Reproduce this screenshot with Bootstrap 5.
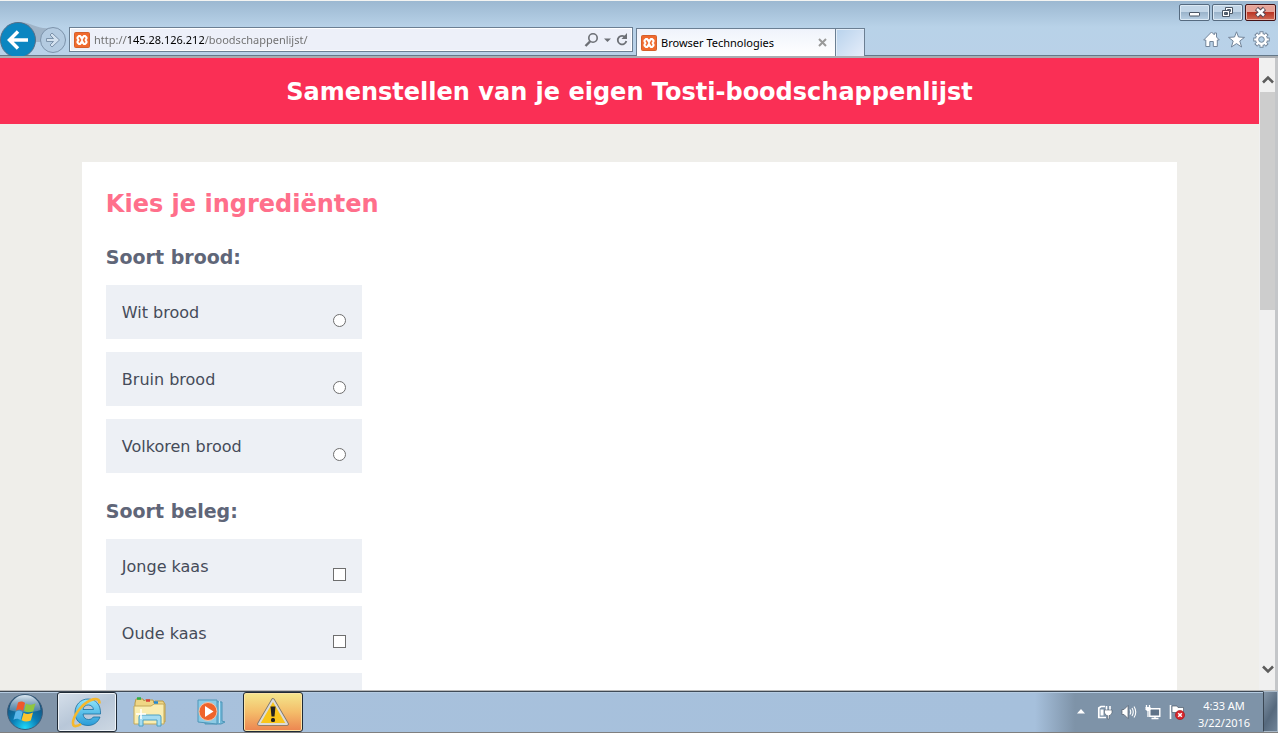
<!DOCTYPE html>
<html lang="nl">
<head>
<meta charset="utf-8">
<meta name="viewport" content="width=device-width, initial-scale=1">
<title>Browser Technologies</title>
<link href="https://cdn.jsdelivr.net/npm/bootstrap@5.3.0/dist/css/bootstrap.min.css" rel="stylesheet">
<style>
  body { font-family: "Noto Sans", "Open Sans", sans-serif; font-size: 11px; line-height: 16px; background: #b9d1e8; }
  svg { display: block; flex: none; }
  button { border: 0; padding: 0; background: none; }

  /* Browser frame */
  .frame-top { height: 58px; border-top: 1px solid #f4f4f2; border-bottom: 2px solid #a9adb2; background: linear-gradient(#9cb8d1 0, #b8d2e8 26px, #b9d1e8 100%); box-shadow: inset 0 -1px #647889; }
  .nav-circles { width: 69px; }
  .address { width: 564px; height: 25px; border: 1px solid #6b7f93; background: #edf0f9; box-shadow: inset 0 0 0 1px #fff; }
  .address input { border: 0; outline: 0; padding: 0; font-size: 11px; color: transparent; background: linear-gradient(90deg, #6d6d6d 32px, #000 32px 110px, #6d6d6d 110px); -webkit-background-clip: text; background-clip: text; }
  .page-tab { width: 200px; height: 28px; margin-left: 3px; border: 1px solid #6b7f93; border-bottom: 0; background: linear-gradient(#eff3fb, #fff); color: #000; }
  .new-tab { width: 29px; height: 28px; border: 1px solid #6b7f93; border-left: 0; border-bottom: 0; background: linear-gradient(135deg, #b8d2ec, #e6eefa); box-shadow: inset 1px 1px #e2edf8; }
  .frame-tools { padding: 3px 2px 4px 0; }
  .win-btns { gap: 2px; }
  .tool-btns { padding-right: 6px; }
  .win-btn { width: 31px; height: 17px; border: 1px solid #566b80; border-radius: 2px; background: linear-gradient(#c3d6e7 0 45%, #9bb4cb 50%, #b9d0e4); box-shadow: inset 0 0 0 1px #dce9f4; }
  .win-close { border-color: #431216; background: linear-gradient(#e6a398 0 45%, #bb3626 50%, #cf6a54); box-shadow: inset 0 0 0 1px #e9b1a6; }

  /* Web page */
  .site { font-family: Verdana, "DejaVu Sans", sans-serif; background: #efeeea; }
  .site-header { height: 66px; padding-top: 2px; background: #fa2f55; color: #fff; }
  .site-title { font-size: 24px; line-height: 32px; font-weight: 700; }
  .panel { width: 87%; margin: 38px auto 0; padding: 24px; background: #fff; }
  .panel-title { font-size: 24px; line-height: 36px; margin-bottom: 10px; font-weight: 700; color: #ff6f8b; }
  .group-title { font-size: 19px; line-height: 26px; padding: 12px 0 15px; font-weight: 700; color: #5f6678; }
  .choice { width: 256px; height: 54px; margin-bottom: 13px; padding: 2px 16px 0; background: #edf0f5; color: #454b59; font-size: 16px; line-height: 24px; }
  .choice input { appearance: none; width: 13px; height: 13px; margin: 0 0 12px; border: 1px solid #6e6e6e; background: #fff; }
  .choice input[type=radio] { border-radius: 50%; }
  .scroller { width: 19px; padding-left: 1px; background: #f0f0f0; border-right: 3px solid #c4c6c9; }
  .scroll-arrow { height: 34px; padding-top: 8px; }
  .scroll-thumb { height: 218px; background: #cdcdcd; }

  /* Taskbar */
  .taskbar { height: 43px; border-top: 1px solid #b9b9b9; border-bottom: 1px solid #7f7f7f; background: linear-gradient(90deg, #8094a9 0 56px, #a8c1dc 118px, #a6c0dc 1035px, #7e93a8 1075px); box-shadow: inset 0 1px #3f4a56, inset 0 2px #b5cbe1; }
  .orb { margin: 0 14px 0 7px; }
  .task { width: 60px; height: 40px; border: 1px solid #1f2a36; border-radius: 3px; margin-right: 2px; }
  .task-flat { border-color: transparent; }
  .task-open { background: linear-gradient(150deg, #d5dfea, #b8c7d8 50%, #cdd8e3); box-shadow: inset 0 0 0 1px #eef3f8; }
  .task-alert { background: linear-gradient(#f3e78d, #f4bd6a 50%, #ec8450); box-shadow: inset 0 0 0 1px #fbe4a6; }
  .clock { width: 78px; line-height: 17px; color: #fff; }
  .desktop-peek { width: 15px; border: 1px solid #a9b9c8; border-left-color: #3a4653; background: linear-gradient(120deg, #8496a8, #56697d 55%, #6f8397); }
</style>
</head>
<body class="vh-100 d-flex flex-column overflow-hidden">

<svg width="0" height="0" class="position-absolute" aria-hidden="true">
  <symbol id="xampp" viewBox="0 0 16 16">
    <rect x=".5" y=".5" width="15" height="15" rx="1" fill="#f06a2e" stroke="#d4602c"/>
    <path d="M4.500 3h2L8 4.500 9.500 3h2L13.500 5v2l-1 1 1 1v2l-2 2h-2L8 11.500 6.500 13h-2l-2-2V9l1-1-1-1V5z" fill="#fff"/>
    <path d="M5 5.500L6.500 8 5 10.500M11 5.500L9.500 8l1.500 2.500M6.500 8" fill="none" stroke="#f06a2e" stroke-width="1.500"/>
  </symbol>
</svg>

<header class="frame-top d-flex align-items-end justify-content-between flex-shrink-0">
  <div class="d-flex align-items-end">
    <div class="nav-circles">
      <svg width="69" height="34" viewBox="0 0 69 34" role="img" aria-label="Terug en vooruit">
        <path d="M18 0c15 0 18 8 34 6v14H18z" fill="#9fb3c7"/>
        <circle cx="18" cy="18" r="17.500" fill="#0b86c1" stroke="#566f88"/>
        <path d="M28 18H10M18 9.500L9.500 18l8.500 8.500" fill="none" stroke="#fff" stroke-width="3.500"/>
        <circle cx="53" cy="18" r="12.500" fill="#b4cbe1" stroke="#7d93ab"/>
        <path d="M46.500 16.500h7l-3.500-3.500 2-2 7.500 7-7.500 7-2-2 3.500-3.500h-7z" fill="#d3e1ef" stroke="#7d93ab"/>
      </svg>
    </div>
    <form class="address d-flex align-items-center mb-1 ps-1 pe-1">
      <svg width="16" height="16" class="me-1"><use href="#xampp"/></svg>
      <input class="flex-grow-1" type="text" aria-label="Adres" value="http://145.28.126.212/boodschappenlijst/">
      <button type="button" aria-label="Zoeken"><svg width="28" height="16" viewBox="0 0 28 16"><circle cx="9" cy="6" r="4.200" fill="none" stroke="#6c6f75" stroke-width="1.600"/><path d="M6 9.500L1.500 14" stroke="#6c6f75" stroke-width="2.400"/><path d="M20 6.500h7l-3.500 3.500z" fill="#6c6f75"/></svg></button>
      <button type="button" class="ms-1" aria-label="Vernieuwen"><svg width="12" height="14" viewBox="0 0 12 14"><path d="M9.500 4.500A4.300 4.300 0 1 0 10.300 8" fill="none" stroke="#6c6f75" stroke-width="1.800"/><path d="M11 0v6H5.500z" fill="#6c6f75"/></svg></button>
    </form>
    <div class="page-tab d-flex align-items-center px-1">
      <svg width="16" height="16" class="me-1"><use href="#xampp"/></svg>
      <span class="flex-grow-1">Browser Technologies</span>
      <button type="button" aria-label="Tabblad sluiten" class="me-1"><svg width="9" height="9" viewBox="0 0 9 9"><path d="M1 1l7 7M8 1L1 8" stroke="#999" stroke-width="2"/></svg></button>
    </div>
    <button type="button" class="new-tab" aria-label="Nieuw tabblad"></button>
  </div>

  <div class="frame-tools d-flex flex-column align-items-end align-self-stretch justify-content-between">
    <div class="win-btns d-flex">
      <button type="button" class="win-btn" aria-label="Minimaliseren"><svg width="29" height="15" viewBox="0 0 29 15"><rect x="9.500" y="7.500" width="10" height="3.500" rx=".5" fill="#fff" stroke="#4a5665"/></svg></button>
      <button type="button" class="win-btn" aria-label="Verkleinen"><svg width="29" height="15" viewBox="0 0 29 15"><g fill="#fff" stroke="#4a5665"><path fill-rule="evenodd" d="M12.500 2.500h7v6h-7zM14.500 4.500h3v2h-3z"/><path fill-rule="evenodd" d="M9.500 5.500h7v6h-7zM11.500 7.500h3v2h-3z"/></g></svg></button>
      <button type="button" class="win-btn win-close" aria-label="Sluiten"><svg width="29" height="15" viewBox="0 0 29 15"><path d="M10.500 3.500L18.500 11M18.500 3.500L10.500 11" stroke="#5b4a55" stroke-width="4.600"/><path d="M11 4l7 6.500M18 4l-7 6.500" stroke="#fff" stroke-width="2.400"/></svg></button>
    </div>
    <div class="tool-btns d-flex gap-2 pb-1">
      <button type="button" aria-label="Start"><svg width="17" height="17" viewBox="0 0 17 17"><path d="M8.500 1l2.800 2.800V2h2.200v4l2.800 3h-2v6.500h-4v-5h-3.500v5h-4V9H.7z" fill="#fff" stroke="#73859a"/></svg></button>
      <button type="button" aria-label="Favorieten"><svg width="17" height="17" viewBox="0 0 17 17"><path d="M8.500.8l2 5.200 6 .4-4.700 3.600 1.800 6-5.100-3.400L3.400 16l1.800-6L.5 6.400l6-.4z" fill="#fff" stroke="#73859a"/></svg></button>
      <button type="button" aria-label="Extra"><svg width="17" height="17" viewBox="0 0 17 17"><g stroke="#73859a" stroke-width="4"><path id="teeth" d="M8.500.3v16.400M.3 8.500h16.400M2.700 2.700l11.600 11.600M14.300 2.700L2.700 14.300"/></g><circle cx="8.500" cy="8.500" r="6" fill="#fff" stroke="#73859a"/><path d="M8.500 1.200v14.600M1.200 8.500h14.600M3.400 3.400l10.200 10.200M13.600 3.400L3.400 13.600" stroke="#fff" stroke-width="2.200"/><circle cx="8.500" cy="8.500" r="2.800" fill="#b9d1e8" stroke="#73859a"/></svg></button>
    </div>
  </div>
</header>

<div class="d-flex flex-grow-1 overflow-hidden">
  <div class="site flex-grow-1 overflow-hidden">
    <div class="site-header d-flex align-items-center justify-content-center">
      <h1 class="site-title m-0">Samenstellen van je eigen Tosti-boodschappenlijst</h1>
    </div>
    <main class="panel">
      <h2 class="panel-title">Kies je ingrediënten</h2>
      <h3 class="group-title m-0">Soort brood:</h3>
      <label class="choice d-flex align-items-center justify-content-between"><span>Wit brood</span><input class="align-self-end" type="radio" name="brood"></label>
      <label class="choice d-flex align-items-center justify-content-between"><span>Bruin brood</span><input class="align-self-end" type="radio" name="brood"></label>
      <label class="choice d-flex align-items-center justify-content-between"><span>Volkoren brood</span><input class="align-self-end" type="radio" name="brood"></label>
      <h3 class="group-title m-0">Soort beleg:</h3>
      <label class="choice d-flex align-items-center justify-content-between"><span>Jonge kaas</span><input class="align-self-end" type="checkbox" name="beleg"></label>
      <label class="choice d-flex align-items-center justify-content-between"><span>Oude kaas</span><input class="align-self-end" type="checkbox" name="beleg"></label>
      <div class="choice"></div>
    </main>
  </div>
  <div class="scroller d-flex flex-column flex-shrink-0">
    <button type="button" class="scroll-arrow d-flex justify-content-center align-items-center" aria-label="Omhoog"><svg width="12" height="9" viewBox="0 0 12 9"><path d="M1 7.500l5-5 5 5" fill="none" stroke="#5c5c5c" stroke-width="2.600"/></svg></button>
    <div class="scroll-thumb"></div>
    <button type="button" class="scroll-arrow d-flex justify-content-center align-items-center mt-auto pt-0 pb-2" aria-label="Omlaag"><svg width="12" height="9" viewBox="0 0 12 9"><path d="M1 1.500l5 5 5-5" fill="none" stroke="#5c5c5c" stroke-width="2.600"/></svg></button>
  </div>
</div>

<footer class="taskbar d-flex justify-content-between flex-shrink-0">
  <div class="d-flex align-items-center">
    <button type="button" class="orb" aria-label="Startmenu">
      <svg width="36" height="36" viewBox="0 0 36 36">
        <defs>
          <radialGradient id="orb" cx=".5" cy=".95" r=".85"><stop offset="0" stop-color="#20d8f8"/><stop offset=".45" stop-color="#0b7db5"/><stop offset="1" stop-color="#174a72"/></radialGradient>
          <linearGradient id="shine" x2="0" y2="1"><stop stop-color="#dbe8f2"/><stop offset="1" stop-color="#7c9cb8" stop-opacity=".5"/></linearGradient>
        </defs>
        <circle cx="18" cy="18" r="17.500" fill="url(#orb)" stroke="#3d5c79"/>
        <path d="M2.500 16a15.500 15 0 0 1 31 0c-8 3-23 3-31 0z" fill="url(#shine)"/>
        <path d="M11 8.500c3-1.500 5-1 7 .5l-2 8c-2-1.500-4-2-7-.5z" fill="#f0572b"/>
        <path d="M19 9.500c3 1.800 6 1.500 9.500-.3l-2.200 8c-3.400 1.500-6.200 1.500-9.300-.2z" fill="#8fc641"/>
        <path d="M8.600 17.700c3-1.500 5-1 7 .5l-2.100 8c-2-1.500-4-2-7-.5z" fill="#5bb6ea"/>
        <path d="M16.600 18.700c3 1.800 6 1.600 9.400-.2l-2.200 8c-3.400 1.500-6.200 1.500-9.300-.2z" fill="#fcc42c"/>
      </svg>
    </button>
    <button type="button" class="task task-open d-flex justify-content-center align-items-center" aria-label="Internet Explorer">
      <svg width="32" height="32" viewBox="0 0 32 32">
        <defs><linearGradient id="ie" x2="0" y2="1"><stop stop-color="#8fe4fb"/><stop offset="1" stop-color="#2a9cd8"/></linearGradient></defs>
        <path fill-rule="evenodd" d="M17 3c8 0 13 6 12.500 15H12c.3 3.500 2.500 5.500 5.500 5.500 2.300 0 3.800-.9 4.800-2.500H29c-2 5.500-6.500 8.500-12 8.500-8 0-13-5.500-13-13S9.500 3 17 3zM12 13.500h10.500C22 10.500 20 9 17.200 9s-4.700 1.600-5.200 4.500z" fill="url(#ie)" stroke="#1b6f9f" stroke-width=".8"/>
        <path d="M28.500 7.500c.5-8-11-4.500-19 4.500S-.5 31 5 30c1.500-.2 3.500-1 5-2" fill="none" stroke="#f5b82e" stroke-width="2.600"/>
      </svg>
    </button>
    <button type="button" class="task task-flat d-flex justify-content-center align-items-center" aria-label="Verkenner">
      <svg width="34" height="32" viewBox="0 0 34 32">
        <path d="M3 7l1-4h7l1 2 1-1h8l1 3 1-2h8l2 3v18H3z" fill="#efd684" stroke="#b79a4a"/>
        <path d="M2 10h17l3-2h10v20H2z" fill="#f9edb1" stroke="#c3a858"/>
        <path d="M5 2.500h4" stroke="#30ad45" stroke-width="2.500"/><path d="M14 4.500h4" stroke="#d94036" stroke-width="2.500"/><path d="M22 6.500h4" stroke="#248bd2" stroke-width="2.500"/>
        <path d="M7 30V21q0-2 2-2h18q2 0 2 2v9h-4v-6H11v6z" fill="#a4dcf1" stroke="#4ba0c4"/>
        <path d="M9 13v10M4 18h10" stroke="#fff" stroke-width="1.500"/>
      </svg>
    </button>
    <button type="button" class="task task-flat d-flex justify-content-center align-items-center" aria-label="Mediaspeler">
      <svg width="32" height="28" viewBox="0 0 32 28">
        <path d="M10 3l17 1v19l3 1-4 2H10z" fill="#72b8d8" stroke="#4e96b8"/><path d="M24.500 3v22" stroke="#c3e7f4"/>
        <path d="M3 2h19v24L3 24z" fill="#8ccbe5" stroke="#4e96b8"/>
        <circle cx="13" cy="13.500" r="9" fill="#ef642b" stroke="#f6c1a5"/><path d="M10 8l8.500 5.500L10 19z" fill="#fff"/>
      </svg>
    </button>
    <button type="button" class="task task-alert d-flex justify-content-center align-items-center" aria-label="Waarschuwing">
      <svg width="32" height="28" viewBox="0 0 32 28">
        <path d="M16 2L30 26H2z" fill="#f9c51b" stroke="#77756f" stroke-width="3.600" stroke-linejoin="round"/>
        <path d="M16 2L30 26H2z" fill="#f9c51b" stroke="#dedcd6" stroke-width="2" stroke-linejoin="round"/>
        <path d="M13.500 8.500h5l-1 10h-3z" fill="#222"/><rect x="14" y="20" width="4" height="4" rx="1.500" fill="#222"/>
      </svg>
    </button>
  </div>

  <div class="d-flex">
    <div class="d-flex align-items-center gap-2">
      <button type="button" aria-label="Verborgen pictogrammen" class="me-1"><svg width="8" height="5" viewBox="0 0 8 5"><path d="M4 0l4 4.500H0z" fill="#fff"/></svg></button>
      <svg width="16" height="16" viewBox="0 0 16 16"><path d="M8 2.500H4L1.800 4v9.500H9" fill="none" stroke="#fff" stroke-width="1.700"/><path d="M3.500 5.500h3v6h-3z" fill="#fff"/><path d="M9.500 2v4M13 2v4" stroke="#fff" stroke-width="1.600"/><path d="M7.500 6h7.500v3l-2 2.500h-1V15h-1.500v-3.500h-1L7.500 9z" fill="#fff" stroke="#4d5a68" stroke-width=".6"/></svg>
      <svg width="16" height="16" viewBox="0 0 16 16"><path d="M1 5.500h2L7 1.500v13l-4-4H1z" fill="#fff" stroke="#4d5a68" stroke-width=".7"/><path d="M9 5.500q1.500 2.500 0 5M11 4q2.500 4 0 8M13 2.500q3.500 5.500 0 11" fill="none" stroke="#fff" stroke-width="1.100"/></svg>
      <svg width="16" height="16" viewBox="0 0 16 16"><path d="M4.800 4.800h10v7.500h-10z" fill="#5f7388" stroke="#fff" stroke-width="1.400"/><path d="M6.500 14.500h7M10 12v2" stroke="#fff" stroke-width="1.400"/><path d="M1.500 1v3M4.500 1v3M3 6v7" stroke="#fff" stroke-width="1.300"/><path d="M.5 3h5v2.500L4 7H2L.5 5.500z" fill="#fff"/></svg>
      <svg width="16" height="16" viewBox="0 0 16 16"><path d="M1.500 1v14" stroke="#fff" stroke-width="1.600"/><path d="M3 2h5l1 1.500h5.500V10H8.500L7.500 8.500H3z" fill="#fff" stroke="#4d5a68" stroke-width=".7"/><circle cx="11" cy="11" r="4.600" fill="#d8262c" stroke="#9c1519" stroke-width=".6"/><path d="M9.200 9.200l3.600 3.600M12.800 9.200l-3.600 3.600" stroke="#fff" stroke-width="1.500"/></svg>
    </div>
    <div class="clock text-center d-flex flex-column justify-content-center mt-1"><span>4:33 AM</span><span>3/22/2016</span></div>
    <button type="button" class="desktop-peek" aria-label="Bureaublad weergeven"></button>
  </div>
</footer>

<script src="https://cdn.jsdelivr.net/npm/bootstrap@5.3.0/dist/js/bootstrap.bundle.min.js"></script>
</body>
</html>
